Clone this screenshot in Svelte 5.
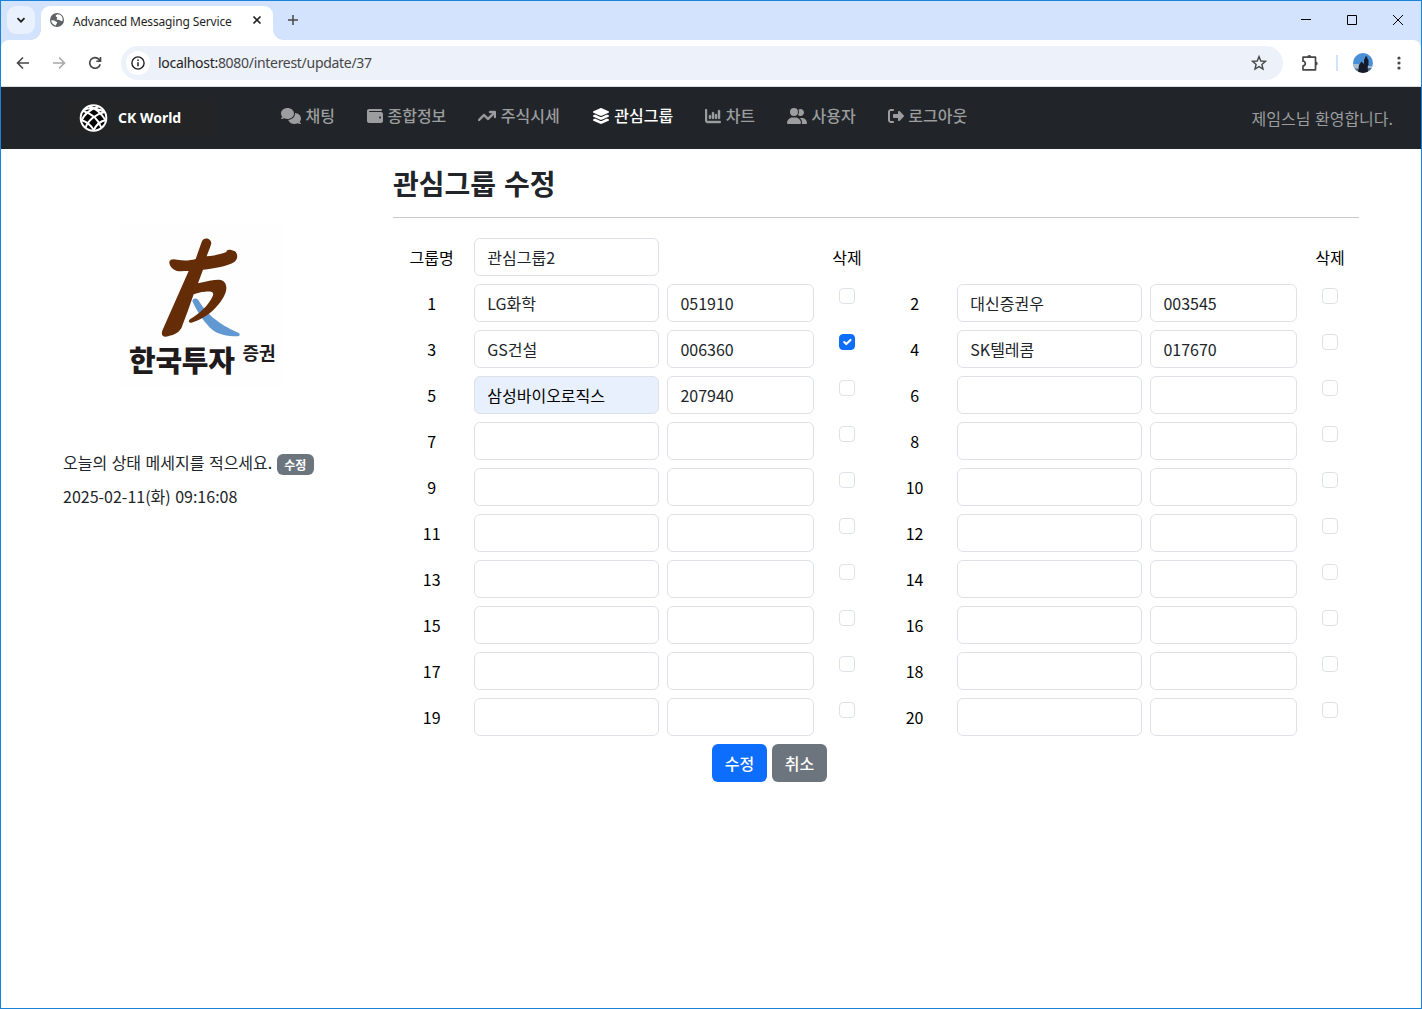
<script>
  const menu = [
    { label: '채팅', icon: 'comments', box: 640 },
    { label: '종합정보', icon: 'wallet', box: 512 },
    { label: '주식시세', icon: 'trend', box: 576 },
    { label: '관심그룹', icon: 'layers', box: 576, active: true },
    { label: '차트', icon: 'chart', box: 512 },
    { label: '사용자', icon: 'users', box: 640 },
    { label: '로그아웃', icon: 'logout', box: 512 }
  ];

  const paths = {
    comments:
      'M208 352c114.9 0 208-78.8 208-176S322.9 0 208 0S0 78.8 0 176c0 38.6 14.7 74.3 39.6 103.4c-3.5 9.4-8.7 17.7-14.2 24.7c-4.8 6.2-9.7 11-13.3 14.3c-1.8 1.6-3.3 2.9-4.3 3.7c-.5 .4-.9 .7-1.1 .8l-.2 .2C1 327.2-1.4 334.4 .8 340.9S9.1 352 16 352c21.8 0 43.8-5.6 62.1-12.5c9.2-3.5 17.8-7.4 25.2-11.4C134.1 343.3 169.8 352 208 352zM448 176c0 112.3-99.1 196.9-216.5 207C255.8 457.4 336.4 512 432 512c38.2 0 73.9-8.7 104.7-23.9c7.5 4 16 7.9 25.2 11.4c18.3 6.9 40.3 12.5 62.1 12.5c6.9 0 13.1-4.5 15.2-11.1c2.1-6.6-.2-13.8-5.8-17.9l-.2-.2c-.2-.2-.6-.4-1.1-.8c-1-.8-2.5-2-4.3-3.7c-3.6-3.3-8.5-8.1-13.3-14.3c-5.5-7-10.7-15.4-14.2-24.7c24.9-29 39.6-64.7 39.6-103.4c0-92.8-84.9-168.9-192.6-175.5c.4 5.1 .6 10.3 .6 15.5z',
    wallet:
      'M64 32C28.7 32 0 60.7 0 96V416c0 35.3 28.7 64 64 64H448c35.3 0 64-28.7 64-64V192c0-35.3-28.7-64-64-64H80c-8.8 0-16-7.2-16-16s7.2-16 16-16H448c17.7 0 32-14.3 32-32s-14.3-32-32-32H64zM416 272a32 32 0 1 1 0 64 32 32 0 1 1 0-64z',
    trend:
      'M384 160c-17.7 0-32-14.3-32-32s14.3-32 32-32H544c17.7 0 32 14.3 32 32V288c0 17.7-14.3 32-32 32s-32-14.3-32-32V205.3L342.6 374.6c-12.5 12.5-32.8 12.5-45.3 0L192 269.3 54.6 406.6c-12.5 12.5-32.8 12.5-45.3 0s-12.5-32.8 0-45.3l160-160c12.5-12.5 32.8-12.5 45.3 0L320 306.7 466.7 160H384z',
    layers:
      'M264.5 5.2c14.9-6.9 32.1-6.9 47 0l218.6 101c8.5 3.9 13.9 12.4 13.9 21.8s-5.4 17.9-13.9 21.8l-218.6 101c-14.9 6.9-32.1 6.9-47 0L45.9 149.8C37.4 145.8 32 137.3 32 128s5.4-17.9 13.9-21.8L264.5 5.2zM476.9 209.6l53.2 24.6c8.5 3.9 13.9 12.4 13.9 21.8s-5.4 17.9-13.9 21.8l-218.6 101c-14.9 6.9-32.1 6.9-47 0L45.9 277.8C37.4 273.8 32 265.3 32 256s5.4-17.9 13.9-21.8l53.2-24.6 152 70.2c23.4 10.8 50.4 10.8 73.8 0l152-70.2zm-152 198.2l152-70.2 53.2 24.6c8.5 3.9 13.9 12.4 13.9 21.8s-5.4 17.9-13.9 21.8l-218.6 101c-14.9 6.9-32.1 6.9-47 0L45.9 405.8C37.4 401.8 32 393.3 32 384s5.4-17.9 13.9-21.8l53.2-24.6 152 70.2c23.4 10.8 50.4 10.8 73.8 0z',
    chart:
      'M32 32c17.7 0 32 14.3 32 32V400c0 8.8 7.2 16 16 16H480c17.7 0 32 14.3 32 32s-14.3 32-32 32H80c-44.2 0-80-35.8-80-80V64C0 46.3 14.3 32 32 32zM160 224c17.7 0 32 14.3 32 32v64c0 17.7-14.3 32-32 32s-32-14.3-32-32V256c0-17.7 14.3-32 32-32zm128-64V320c0 17.7-14.3 32-32 32s-32-14.3-32-32V160c0-17.7 14.3-32 32-32s32 14.3 32 32zm64 32c17.7 0 32 14.3 32 32v96c0 17.7-14.3 32-32 32s-32-14.3-32-32V224c0-17.7 14.3-32 32-32zM480 96V320c0 17.7-14.3 32-32 32s-32-14.3-32-32V96c0-17.7 14.3-32 32-32s32 14.3 32 32z',
    users:
      'M96 128a128 128 0 1 1 256 0A128 128 0 1 1 96 128zM0 482.3C0 383.8 79.8 304 178.3 304h91.4C368.2 304 448 383.8 448 482.3c0 16.4-13.3 29.7-29.7 29.7H29.7C13.3 512 0 498.7 0 482.3zM609.3 512H471.4c5.4-9.4 8.6-20.3 8.6-32v-8c0-60.7-27.1-115.2-69.8-151.8c2.4-.1 4.7-.2 7.1-.2h61.4C567.8 320 640 392.2 640 481.3c0 17-13.8 30.7-30.7 30.7zM432 256c-31 0-59-12.6-79.3-32.9C372.4 196.5 384 163.6 384 128c0-26.8-6.6-52.1-18.3-74.3C384.3 40.1 407.2 32 432 32c61.9 0 112 50.1 112 112s-50.1 112-112 112z',
    logout:
      'M377.9 105.9L500.7 228.7c7.2 7.2 11.3 17.1 11.3 27.3s-4.1 20.1-11.3 27.3L377.9 406.1c-6.4 6.4-15 9.9-24 9.9c-18.7 0-33.9-15.2-33.9-33.9l0-62.1-128 0c-17.7 0-32-14.3-32-32l0-64c0-17.7 14.3-32 32-32l128 0 0-62.1c0-18.7 15.2-33.9 33.9-33.9c9 0 17.6 3.6 24 9.9zM160 96L96 96c-17.7 0-32 14.3-32 32l0 256c0 17.7 14.3 32 32 32l64 0c17.7 0 32 14.3 32 32s-14.3 32-32 32l-64 0c-53 0-96-43-96-96L0 128C0 75 43 32 96 32l64 0c17.7 0 32 14.3 32 32s-14.3 32-32 32z'
  };

  const filled = {
    1: { name: 'LG화학', code: '051910' },
    2: { name: '대신증권우', code: '003545' },
    3: { name: 'GS건설', code: '006360', remove: true },
    4: { name: 'SK텔레콤', code: '017670' },
    5: { name: '삼성바이오로직스', code: '207940', autofill: true }
  };

  const stocks = Array.from({ length: 20 }, (_, i) => ({
    no: i + 1,
    name: '',
    code: '',
    remove: false,
    autofill: false,
    ...filled[i + 1]
  }));
</script>

<div class="window">
  <header class="tabstrip">
    <div class="tabsearch">
      <svg width="10" height="10" viewBox="0 0 10 10"><path d="M1.5 3.2 5 6.7l3.5-3.5" fill="none" stroke="#1f1f1f" stroke-width="1.7" /></svg>
    </div>
    <div class="tab">
      <svg class="favicon" width="16" height="16" viewBox="0 0 16 16">
        <circle cx="8" cy="8" r="7" fill="#5f6368" />
        <path d="M2.2 8.3C4 8 5.4 8.2 6.2 9c.8.8 1.9.6 2 1.6.1 1-1.2 1.1-1.2 2.9C4.3 13 2.4 11 2.2 8.3zM8.6 2.3c-1.1.5-2 1-1.8 1.9.2.8 1.5.5 1.5 1.4 0 .9-.9 1.1-.4 1.9.6.8 2.2.1 3 .8.7.7 1.3 1 2.7.4C14 5 12 2.4 8.6 2.3z" fill="#fff" />
      </svg>
      <span class="tabtitle">Advanced Messaging Service</span>
      <svg class="favicon" width="10" height="10" viewBox="0 0 10 10"><path d="m1.5 1.5 7 7m0-7-7 7" stroke="#1f1f1f" stroke-width="1.6" /></svg>
    </div>
    <svg class="newtab" width="12" height="12" viewBox="0 0 12 12"><path d="M6 1v10M1 6h10" stroke="#474747" stroke-width="1.5" /></svg>
    <div class="controls">
      <svg width="10" height="10" viewBox="0 0 10 10"><path d="M0 4.5h10" stroke="#000" /></svg>
      <svg width="10" height="10" viewBox="0 0 10 10"><path d="M.5.5h9v9h-9z" fill="none" stroke="#000" /></svg>
      <svg width="10" height="10" viewBox="0 0 10 10"><path d="m0 0 10 10M10 0 0 10" stroke="#000" /></svg>
    </div>
  </header>

  <div class="toolbar">
    <div class="history">
      <svg width="16" height="16" viewBox="0 0 16 16"><path d="M14 8H3M8 2.500 2.500 8 8 13.500" fill="none" stroke="#474747" stroke-width="1.6" /></svg>
      <svg width="16" height="16" viewBox="0 0 16 16"><path d="M2 8h11M8 2.500 13.500 8 8 13.500" fill="none" stroke="#a8a8a8" stroke-width="1.6" /></svg>
      <svg width="16" height="16" viewBox="0 0 16 16"><path d="M13.200 9.200A5.300 5.300 0 1 1 12 4.400l1.300 1.500M13.500 2v4.200H9.300" fill="none" stroke="#474747" stroke-width="1.6" /></svg>
    </div>
    <div class="address">
      <span class="siteinfo">
        <svg width="16" height="16" viewBox="0 0 16 16"><circle cx="8" cy="8" r="6.1" fill="none" stroke="#1f1f1f" stroke-width="1.4" /><path d="M8 7.200v4M8 4.600v1.500" stroke="#1f1f1f" stroke-width="1.5" /></svg>
      </span>
      <span class="url"><b>localhost:</b>8080/interest/update/37</span>
      <svg width="18" height="18" viewBox="0 0 18 18"><path d="m9 2.600 1.800 4.400 4.700.4-3.600 3.100 1.100 4.600L9 12.600l-4 2.500 1.100-4.600-3.600-3.100 4.700-.4z" fill="none" stroke="#474747" stroke-width="1.4" /></svg>
    </div>
    <div class="tools">
      <svg width="20" height="20" viewBox="0 0 20 20"><path d="M3 4.200h12.500v12.600H3v-4a2.300 2.300 0 0 0 0-4.600z" fill="none" stroke="#474747" stroke-width="1.7" stroke-linejoin="round" /><path d="M7.300 4a2 2 0 0 1 4 0zM15.700 8.500a2 2 0 0 1 0 4z" fill="#474747" /></svg>
      <span class="divider"></span>
      <svg width="20" height="20" viewBox="0 0 20 20">
        <clipPath id="avatar"><circle cx="10" cy="10" r="10" /></clipPath>
        <g clip-path="url(#avatar)">
          <path d="M0 0h20v20H0z" fill="#4a90d9" />
          <path d="M0 11l5 0 5 1 6 1h4v7H0z" fill="#a9bdd0" />
          <path d="M0 15l6 1v4H0zM14 15h6v5h-6z" fill="#4e6a86" />
          <path d="M5 20l1-8 2.500-3.500L11 11V6.500l1.200-1.200V3.500h2v1.800l1.300 1.500v5l-.8 2 .3 6.200z" fill="#151a26" />
        </g>
      </svg>
      <svg width="4" height="16" viewBox="0 0 4 16"><g fill="#474747"><circle cx="2" cy="3" r="1.6" /><circle cx="2" cy="8" r="1.6" /><circle cx="2" cy="13" r="1.6" /></g></svg>
    </div>
  </div>

  <nav class="navbar">
    <div class="brand">
      <svg width="30" height="30" viewBox="0 0 30 30">
        <circle cx="15.5" cy="15" r="12.8" fill="#050505" stroke="#fff" stroke-width="2" />
        <path d="M11 3C17 5 23 10 27.500 17M5 8C13 10 20 16 23.500 25M3 17C8 18.500 13 22 16 27.500M20.500 3.500C13 6 6 11 3.500 18M26.500 9C18 11 10 17 7.500 25M28 17C23 18 18 22 15.500 27.500M5 8C10 4 17 4.500 26.500 9" fill="none" stroke="#fff" stroke-width="2" />
      </svg>
      <span>CK World</span>
    </div>
    <ul class="menu">
      {#each menu as item}
        <li class:active={item.active}>
          <svg width={item.box / 32} height="16" viewBox="0 0 {item.box} 512"><path d={paths[item.icon]} fill="currentColor" fill-rule="evenodd" stroke="currentColor" stroke-width={item.icon === 'trend' || item.icon === 'chart' ? 14 : 0} /></svg>
          <span>{item.label}</span>
        </li>
      {/each}
    </ul>
    <span class="welcome">제임스님 환영합니다.</span>
  </nav>

  <div class="page">
    <aside>
      <div class="profile">
        <svg class="emblem" width="80" height="101" viewBox="152 48 240 303">
          <path d="M246 243C247 234 258 233 264 240C287 279 318 309 385 339C391 343 388 349 381 349C350 349 322 342 307 330C282 308 262 279 246 243z" fill="#6298d2" />
          <path d="M274 66C279 50 302 53 303 70C299 86 293 97 289 109C312 107 334 102 348 96C349 86 362 88 374 94C384 103 382 117 373 125C350 139 315 145 278 149L263 190C288 184 308 179 326 179C345 180 352 197 346 217C332 256 288 297 243 308C235 309 233 303 239 298C268 281 294 257 307 229C313 215 302 214 284 215C271 216 260 219 250 223C238 258 226 292 213 325C203 341 186 347 166 350C154 350 152 341 157 329L235 153C221 153 207 155 198 152C185 147 176 136 177 125C179 117 190 116 201 119C219 123 239 122 256 117z" fill="#652c08" />
        </svg>
        <div class="caption"><strong>한국투자</strong><small>증권</small></div>
      </div>
      <p class="status">오늘의 상태 메세지를 적으세요. <span class="badge">수정</span></p>
      <p class="clock">2025-02-11(화) 09:16:08</p>
    </aside>

    <main>
      <h3>관심그룹 수정</h3>
      <div class="grid">
        <span class="label">그룹명</span>
        <input value="관심그룹2" />
        <span></span>
        <span class="label">삭제</span>
        <span></span>
        <span></span>
        <span></span>
        <span class="label">삭제</span>
        {#each stocks as s}
          <span class="label">{s.no}</span>
          <input value={s.name} class:autofill={s.autofill} />
          <input value={s.code} />
          <span class="check" class:checked={s.remove}>
            {#if s.remove}
              <svg width="14" height="14" viewBox="0 0 20 20"><path d="m6 10 3 3 6-6" fill="none" stroke="#fff" stroke-linecap="round" stroke-linejoin="round" stroke-width="3" /></svg>
            {/if}
          </span>
        {/each}
      </div>
      <div class="actions">
        <button class="primary">수정</button>
        <button>취소</button>
      </div>
    </main>
  </div>
</div>

<style>
  :global(body) {
    margin: 0;
    background: #fff;
  }
  * {
    box-sizing: border-box;
  }
  svg {
    display: block;
    flex: none;
  }
  .window {
    height: 1009px;
    border: 1px solid #1a83d8;
    background: #fff;
    font: 16px/24px 'Noto Sans CJK KR', sans-serif;
    color: #212529;
    overflow: hidden;
  }
  .tabstrip {
    height: 39px;
    display: flex;
    align-items: center;
    background: #d3e3fd;
  }
  .tabsearch {
    width: 28px;
    height: 28px;
    margin: 0 6px 2px;
    border-radius: 9px;
    background: #e9f0fe;
    display: grid;
    place-items: center;
  }
  .tab {
    position: relative;
    width: 232px;
    height: 34px;
    align-self: flex-end;
    padding: 0 11px 3px 8px;
    border-radius: 9px 9px 0 0;
    background: #fff;
    display: flex;
    align-items: center;
    gap: 8px;
  }
  .tab::before,
  .tab::after {
    content: '';
    position: absolute;
    bottom: 0;
    width: 10px;
    height: 10px;
  }
  .tab::before {
    left: -10px;
    background: radial-gradient(circle at 0 0, transparent 9.5px, #fff 10px);
  }
  .tab::after {
    right: -10px;
    background: radial-gradient(circle at 100% 0, transparent 9.5px, #fff 10px);
  }
  .favicon {
    margin-bottom: 3px;
  }
  .tabtitle {
    flex: 1;
    font: 12px/16px 'Noto Sans', sans-serif;
    letter-spacing: -0.15px;
    white-space: nowrap;
    color: #1f1f1f;
  }
  .newtab {
    margin: 0 0 2px 14px;
  }
  .controls {
    margin: 0 18px 2px auto;
    display: flex;
    gap: 36px;
  }
  .toolbar {
    height: 47px;
    border-bottom: 1px solid #dcdde0;
    box-shadow: 0 -8px 0 #d3e3fd;
    border-radius: 8px 8px 0 0;
    background: #fff;
    display: flex;
    align-items: center;
    padding: 0 20px 0 14px;
  }
  .history {
    display: flex;
    gap: 20px;
  }
  .address {
    width: 1162px;
    height: 34px;
    margin-left: 18px;
    border-radius: 17px;
    background: #ecf1fa;
    display: flex;
    align-items: center;
    padding: 0 15px 0 5px;
  }
  .siteinfo {
    width: 24px;
    height: 24px;
    border-radius: 50%;
    background: #fff;
    display: grid;
    place-items: center;
  }
  .url {
    flex: 1;
    margin-left: 8px;
    font: 14px/20px 'Noto Sans', sans-serif;
    letter-spacing: -0.3px;
    color: #474747;
  }
  .url b {
    font-weight: 400;
    color: #1f1f1f;
  }
  .tools {
    margin-left: 17px;
    display: flex;
    align-items: center;
    gap: 15.5px;
  }
  .tools svg:last-child {
    margin-left: 8px;
  }
  .divider {
    width: 2px;
    height: 16px;
    background: #d3e3fd;
  }
  .tools,
  .address {
    flex: none;
  }
  .navbar {
    height: 62px;
    background: #212529;
    display: flex;
    align-items: center;
    padding: 0 28px 0 62px;
  }
  .brand {
    width: 148px;
    height: 36px;
    padding-left: 15px;
    background: #232425;
    display: flex;
    align-items: center;
    gap: 10px;
    color: #fff;
    font: 700 14px/20px 'Noto Sans', sans-serif;
  }
  .menu {
    display: flex;
    gap: 32px;
    list-style: none;
    margin: 0 0 5px 70px;
    padding: 0;
    font-weight: 500;
    color: #9b9d9e;
  }
  .menu li {
    display: flex;
    align-items: center;
    gap: 4.5px;
  }
  .menu span {
    margin-top: -1px;
  }
  .menu .active {
    color: #fff;
  }
  .welcome {
    margin-left: auto;
    word-spacing: 1px;
    color: #9b9d9e;
  }
  .page {
    display: flex;
    padding-left: 62px;
  }
  aside {
    width: 330px;
  }
  .profile {
    width: 164px;
    height: 164px;
    margin: 74px 0 0 57px;
    padding: 13px 0 0 9px;
    background: #fefefe;
  }
  .emblem {
    margin: 0 0 7px 32px;
  }
  .caption {
    display: flex;
    gap: 8px;
    color: #1f1a1b;
    line-height: 30px;
    white-space: nowrap;
  }
  .caption strong {
    font-size: 29px;
    font-weight: 900;
    letter-spacing: -0.3px;
  }
  .caption small {
    font-size: 18px;
    font-weight: 700;
    line-height: 16px;
  }
  p {
    margin: 0;
  }
  .status {
    margin-top: 63px;
    word-spacing: 0.9px;
  }
  .badge {
    display: inline-block;
    padding: 4px 7.5px;
    border-radius: 6px;
    background: #6c757d;
    color: #fff;
    font-size: 12px;
    font-weight: 700;
    line-height: 13px;
    vertical-align: -1px;
  }
  .clock {
    margin-top: 9px;
    word-spacing: 0.9px;
  }
  main {
    width: 966px;
  }
  h3 {
    margin: 0 0 16px;
    padding: 17px 0 16px;
    border-bottom: 1px solid #c8c9ca;
    font-size: 28px;
    font-weight: 700;
    line-height: 35px;
    word-spacing: 1.5px;
  }
  .grid {
    display: grid;
    grid-template-columns: 8fr 20fr 16fr 6fr 8fr 20fr 16fr 6fr;
    grid-auto-rows: 46px;
  }
  .label {
    padding-top: 11px;
    text-align: center;
    color: #000;
  }
  input {
    min-width: 0;
    margin: 4px;
    padding: 0 12px;
    border: 1px solid #dee2e6;
    border-radius: 6px;
    background: #fff;
    font: inherit;
    color: #212529;
  }
  .autofill {
    background: #e8f0fe;
    color: #000;
  }
  .check {
    width: 16px;
    height: 16px;
    margin-top: 8px;
    justify-self: center;
    border: 1px solid #dee2e6;
    border-radius: 4px;
  }
  .checked {
    border-color: #0d6efd;
    background: #0d6efd;
  }
  .actions {
    display: flex;
    justify-content: center;
    gap: 5px;
    margin: 4px 213px 0 0;
  }
  button {
    width: 55px;
    height: 38px;
    padding: 0;
    border: 0;
    border-radius: 6px;
    background: #6c757d;
    color: #fff;
    font: inherit;
    font-weight: 500;
  }
  .primary {
    background: #0d6efd;
  }
</style>
